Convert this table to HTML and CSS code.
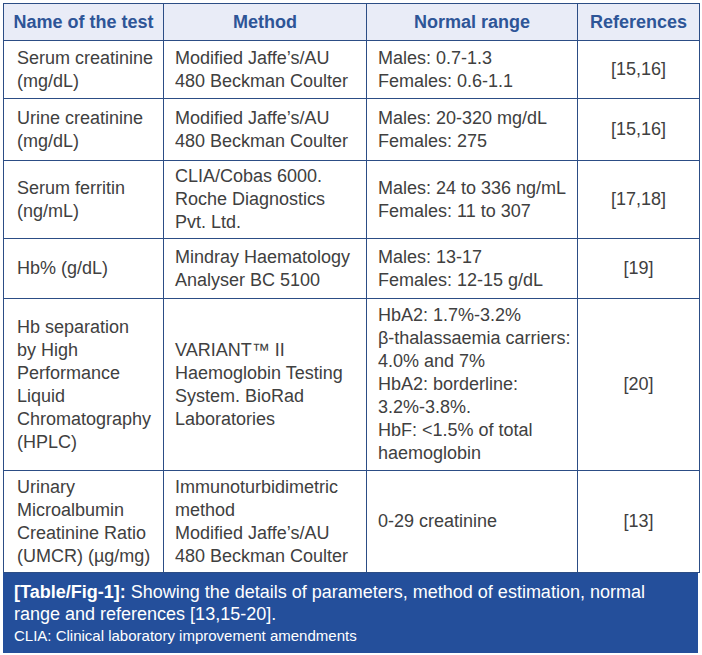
FILE: index.html
```html
<!DOCTYPE html>
<html lang="en">
<head>
<meta charset="utf-8">
<title>Table/Fig-1</title>
<link rel="stylesheet" href="styles.css">
</head>
<body>
<div class="figure">
  <table class="data">
    <colgroup>
      <col class="c1"><col class="c2"><col class="c3"><col class="c4">
    </colgroup>
    <thead>
      <tr class="head">
        <th>Name of the test</th>
        <th>Method</th>
        <th>Normal range</th>
        <th>References</th>
      </tr>
    </thead>
    <tbody>
      <tr class="r1">
        <td>Serum creatinine<br>(mg/dL)</td>
        <td>Modified Jaffe’s/AU<br>480 Beckman Coulter</td>
        <td>Males: 0.7-1.3<br>Females: 0.6-1.1</td>
        <td class="ref">[15,16]</td>
      </tr>
      <tr class="r2">
        <td>Urine creatinine<br>(mg/dL)</td>
        <td>Modified Jaffe’s/AU<br>480 Beckman Coulter</td>
        <td>Males: 20-320 mg/dL<br>Females: 275</td>
        <td class="ref">[15,16]</td>
      </tr>
      <tr class="r3">
        <td>Serum ferritin<br>(ng/mL)</td>
        <td>CLIA/Cobas 6000.<br>Roche Diagnostics<br>Pvt. Ltd.</td>
        <td>Males: 24 to 336 ng/mL<br>Females: 11 to 307</td>
        <td class="ref">[17,18]</td>
      </tr>
      <tr class="r4">
        <td>Hb% (g/dL)</td>
        <td>Mindray Haematology<br>Analyser BC 5100</td>
        <td>Males: 13-17<br>Females: 12-15 g/dL</td>
        <td class="ref">[19]</td>
      </tr>
      <tr class="r5">
        <td>Hb separation<br>by High<br>Performance<br>Liquid<br>Chromatography<br>(HPLC)</td>
        <td>VARIANT™ II<br>Haemoglobin Testing<br>System. BioRad<br>Laboratories</td>
        <td>HbA2: 1.7%-3.2%<br>β-thalassaemia carriers:<br>4.0% and 7%<br>HbA2: borderline:<br>3.2%-3.8%.<br>HbF: &lt;1.5% of total<br>haemoglobin</td>
        <td class="ref">[20]</td>
      </tr>
      <tr class="r6">
        <td>Urinary<br>Microalbumin<br>Creatinine Ratio<br>(UMCR) (µg/mg)</td>
        <td>Immunoturbidimetric<br>method<br>Modified Jaffe’s/AU<br>480 Beckman Coulter</td>
        <td>0-29 creatinine</td>
        <td class="ref">[13]</td>
      </tr>
    </tbody>
  </table>
  <div class="caption">
    <p class="cap-main"><strong>[Table/Fig-1]:</strong> Showing the details of parameters, method of estimation, normal<br>range and references [13,15-20].</p>
    <p class="cap-note">CLIA: Clinical laboratory improvement amendments</p>
  </div>
</div>
</body>
</html>
```
FILE: styles.css
```css
html, body {
  margin: 0;
  padding: 0;
  background: #ffffff;
}

body {
  font-family: "Liberation Sans", Arial, sans-serif;
  color: #404040;
}

.figure {
  width: 696px;
  padding: 3px 0 0 3px;
}

.data {
  width: 696px;
  border-collapse: collapse;
  table-layout: fixed;
  font-size: 18px;
  line-height: 23px;
}

.c1 { width: 160px; }
.c2 { width: 203px; }
.c3 { width: 211px; }
.c4 { width: 122px; }

.data th,
.data td {
  border: 1px solid #2c4d85;
  padding: 0 2px 0 11px;
  vertical-align: middle;
  text-align: left;
  white-space: nowrap;
  overflow: hidden;
}

.data td:first-child {
  padding-left: 13px;
}

.head th {
  background: #e9ecf7;
  color: #2e5597;
  font-weight: bold;
  text-align: center;
  height: 36px;
  padding: 0;
}

.data td.ref {
  text-align: center;
  padding: 0;
}

.r1 td { height: 57px; }
.r2 td { height: 61px; }
.r3 td { height: 77px; }
.r4 td { height: 59px; }
.r5 td { height: 171px; }
.r6 td { height: 101px; }

.caption {
  width: 695px;
  box-sizing: border-box;
  background: #244f9b;
  color: #ffffff;
  padding: 8px 11px 7px 11px;
}

.cap-main {
  margin: 0;
  font-size: 18px;
  line-height: 22px;
}

.cap-main strong {
  font-weight: bold;
}

.cap-note {
  margin: 1px 0 0 0;
  font-size: 15px;
  line-height: 20px;
}
```
